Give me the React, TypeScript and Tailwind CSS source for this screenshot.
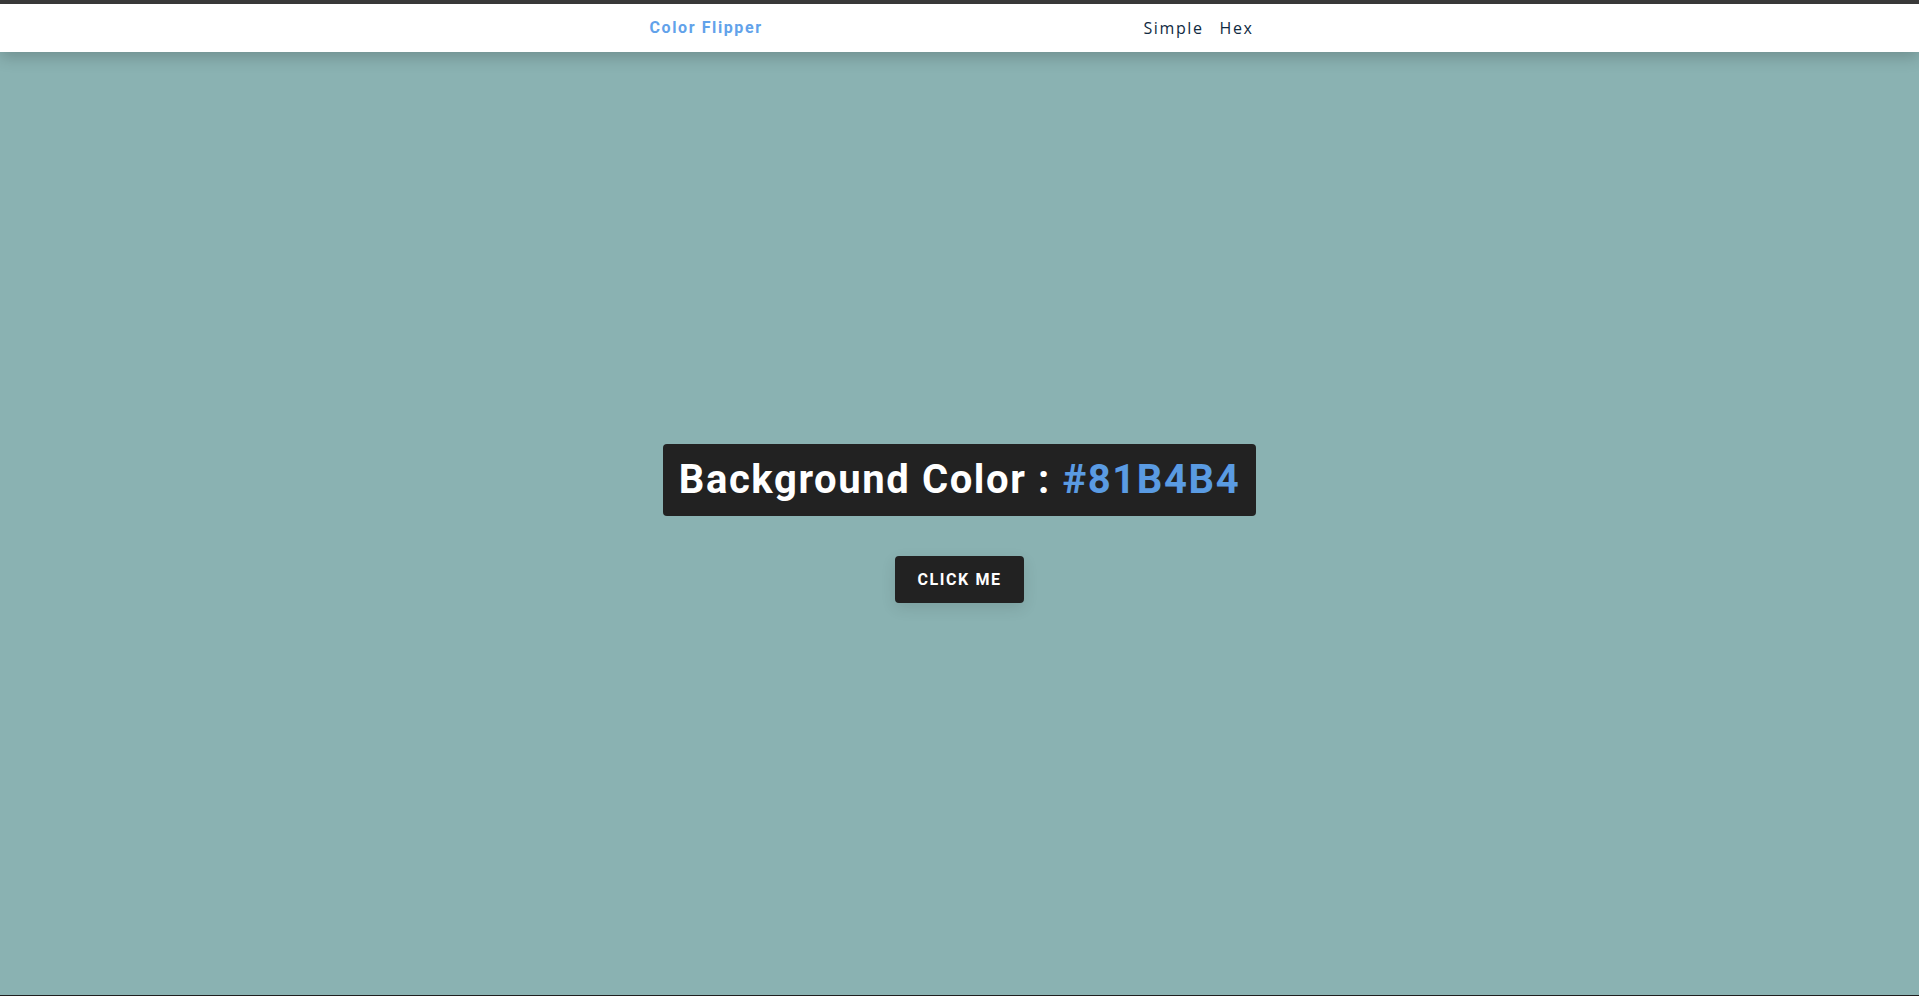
import React from "react";

export default function App() {
  const hex = "#81B4B4";

  return (
    <div className="flex min-h-[996px] flex-col border-t-4 border-b border-t-[#3b3b3b] border-b-[#1f1f1f] bg-[#8ab2b2]">
      {/* Navbar */}
      <nav className="relative z-10 bg-white shadow-[0_5px_15px_rgba(0,0,0,0.2)]">
        <div className="mx-auto flex h-12 w-[90vw] max-w-[620px] items-center justify-between">
          <h4 className="font-['Roboto',sans-serif] text-base font-bold tracking-[0.1rem] text-[#62a2ea]">
            Color Flipper
          </h4>
          <ul className="flex font-['Open_Sans',sans-serif] text-base tracking-[0.1rem] text-[#102a42]">
            <li className="mr-4">Simple</li>
            <li className="mr-4">Hex</li>
          </ul>
        </div>
      </nav>

      {/* Main */}
      <main className="flex flex-1 items-center justify-center">
        <div className="flex flex-col items-center text-center font-['Roboto',sans-serif]">
          <h2 className="mb-10 rounded-[4px] bg-[#222222] px-4 py-4 text-[40px] font-bold leading-[40px] tracking-[0.1rem] text-white">
            Background Color : <span className="text-[#5a9be2]">{hex}</span>
          </h2>
          <button className="rounded-[4px] border-2 border-[#222222] bg-[#222222] px-5 py-3 text-base font-bold uppercase leading-[19px] tracking-[0.1rem] text-white shadow-[0_5px_15px_rgba(0,0,0,0.1)]">
            click me
          </button>
        </div>
      </main>
    </div>
  );
}
